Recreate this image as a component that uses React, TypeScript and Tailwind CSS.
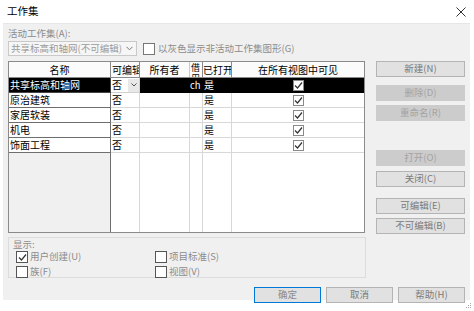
import React from "react";

const font = { fontFamily: '"Noto Sans CJK SC", "Noto Sans", sans-serif' };

function Check({ className = "" }: { className?: string }) {
  return (
    <svg width="9" height="9" viewBox="0 0 9 9" className={className}>
      <polyline points="1,4.5 3.5,7 8,1.5" fill="none" stroke="#333" strokeWidth="1.2" />
    </svg>
  );
}

function Box({ checked, className = "" }: { checked?: boolean; className?: string }) {
  return (
    <div className={`w-[12px] h-[12px] border border-[#555] bg-white flex items-center justify-center shrink-0 ${className}`}>
      {checked && <Check />}
    </div>
  );
}

function Btn({ label, kind }: { label: string; kind: "on" | "off" | "primary" }) {
  const cls =
    kind === "off"
      ? "bg-[#cccccc] border-[#cccccc] text-[#a3a3a3]"
      : kind === "primary"
      ? "bg-[#e1e1e1] border-[#0078d7] text-[#8a8a8a]"
      : "bg-[#e1e1e1] border-[#b4b4b4] text-[#7a7a7a]";
  return (
    <div className={`h-[16px] border flex items-center justify-center text-[9.5px] leading-none ${cls}`}>{label}</div>
  );
}

const rows = [
  { name: "共享标高和轴网", sel: true },
  { name: "原治建筑" },
  { name: "家居软装" },
  { name: "机电" },
  { name: "饰面工程" },
];

export default function App() {
  return (
    <div className="w-[474px] h-[311px] bg-white relative overflow-hidden" style={font}>
      {/* title bar */}
      <div className="h-[23px] flex items-center justify-between pl-[7px] pr-[8px]">
        <span className="text-[10.5px] text-black leading-none">工作集</span>
        <svg width="10" height="10" viewBox="0 0 10 10">
          <path d="M0.5 0.5 L9.5 9.5 M9.5 0.5 L0.5 9.5" stroke="#333" strokeWidth="1" />
        </svg>
      </div>

      {/* body */}
      <div className="ml-[3px] w-[467px] h-[277px] bg-[#f0f0f0] border-t border-[#e6e6e6] flex flex-col">
        <div className="flex pl-[5px]">
          {/* left column */}
          <div className="w-[358px] flex flex-col pt-[3px]">
            <div className="h-[12px] text-[9.5px] leading-[12px] text-[#8c8c8c]">活动工作集(A):</div>
            <div className="mt-[2px] h-[15px] flex items-center">
              <div className="w-[129px] h-[15px] border border-[#c9c9c9] bg-[#f6f6f6] flex items-center justify-between pl-[2px] pr-[3px]">
                <span className="text-[9.5px] leading-none text-[#9a9a9a] whitespace-nowrap">共享标高和轴网(不可编辑)</span>
                <svg width="7" height="5" viewBox="0 0 7 5">
                  <polyline points="0.5,0.8 3.5,3.8 6.5,0.8" fill="none" stroke="#777" strokeWidth="1" />
                </svg>
              </div>
              <Box className="ml-[6px] border-[#777]" />
              <span className="ml-[3px] text-[9.5px] leading-none text-[#8c8c8c] whitespace-nowrap">以灰色显示非活动工作集图形(G)</span>
            </div>

            {/* table */}
            <div className="mt-[5px] w-[357px] h-[172px] border border-[#8a8a8a] bg-white flex flex-col text-[10px] text-black">
              {/* header */}
              <div className="flex h-[16px] border-b border-[#8a8a8a] bg-[#fbfbfb] leading-[15px] shrink-0">
                <div className="w-[102px] border-r border-[#8a8a8a] text-center">名称</div>
                <div className="w-[29px] border-r border-[#8a8a8a] pl-[1px] overflow-hidden whitespace-nowrap">可编辑</div>
                <div className="w-[50px] border-r border-[#c8c8c8] text-center">所有者</div>
                <div className="w-[13px] border-r border-[#8a8a8a] overflow-hidden text-[9px] leading-[11px] pl-[1px] break-all">借用者</div>
                <div className="w-[29px] border-r border-[#8a8a8a] overflow-hidden whitespace-nowrap">已打开</div>
                <div className="flex-1 text-center">在所有视图中可见</div>
              </div>
              {/* rows */}
              {rows.map((r, i) => (
                <div key={i} className={`flex h-[15px] leading-[14px] shrink-0 ${r.sel ? "bg-black text-white" : ""}`}>
                  <div
                    className={`w-[102px] border-r border-b pl-[1px] ${
                      r.sel ? "border-[#444]" : "border-[#6e6e6e] bg-white"
                    }`}
                  >
                    {r.name}
                  </div>
                  {r.sel ? (
                    <div className="w-[29px] border-r border-b border-[#d0d0d0] bg-white text-black flex items-center pl-[1px]">
                      <span className="flex-1">否</span>
                      <div className="w-[11px] h-[13px] bg-[#e8e8e8] flex items-center justify-center">
                        <svg width="6" height="4" viewBox="0 0 6 4">
                          <polyline points="0.5,0.5 3,3 5.5,0.5" fill="none" stroke="#555" strokeWidth="1" />
                        </svg>
                      </div>
                    </div>
                  ) : (
                    <div className="w-[29px] border-r border-b border-[#d8d8d8] pl-[1px]">否</div>
                  )}
                  <div className={`w-[50px] border-r border-b ${r.sel ? "border-black" : "border-[#d8d8d8]"}`}></div>
                  <div className={`w-[13px] border-r border-b overflow-hidden whitespace-nowrap text-[9.5px] ${r.sel ? "border-black" : "border-[#d8d8d8]"}`}>
                    {r.sel ? "ch" : ""}
                  </div>
                  <div className={`w-[29px] border-r border-b pl-[1px] ${r.sel ? "border-black" : "border-[#d8d8d8]"}`}>是</div>
                  <div className={`flex-1 border-b flex items-center justify-center ${r.sel ? "border-black" : "border-[#d8d8d8]"}`}>
                    <div className="w-[11px] h-[11px] border border-[#8a8a8a] bg-white flex items-center justify-center">
                      <Check />
                    </div>
                  </div>
                </div>
              ))}
              {/* empty area */}
              <div className="flex flex-1">
                <div className="w-[102px] bg-[#f0f0f0] border-r border-[#6e6e6e]"></div>
                <div className="w-[29px] border-r border-[#d8d8d8]"></div>
                <div className="w-[50px] border-r border-[#d8d8d8]"></div>
                <div className="w-[13px] border-r border-[#d8d8d8]"></div>
                <div className="w-[29px] border-r border-[#d8d8d8]"></div>
                <div className="flex-1"></div>
              </div>
            </div>

            {/* display group */}
            <div className="mt-[4px] w-[358px] h-[41px] border border-[#dcdcdc] pl-[4px] pt-[1px] text-[9.5px] text-[#8c8c8c]">
              <div className="h-[10px] leading-[10px]">显示:</div>
              <div className="flex mt-[2px]">
                <div className="w-[142px] flex flex-col gap-[3px] pl-[3px]">
                  <div className="flex items-center h-[12px]">
                    <Box checked />
                    <span className="ml-[2px] leading-none">用户创建(U)</span>
                  </div>
                  <div className="flex items-center h-[12px]">
                    <Box />
                    <span className="ml-[2px] leading-none">族(F)</span>
                  </div>
                </div>
                <div className="flex flex-col gap-[3px]">
                  <div className="flex items-center h-[12px]">
                    <Box />
                    <span className="ml-[2px] leading-none">项目标准(S)</span>
                  </div>
                  <div className="flex items-center h-[12px]">
                    <Box />
                    <span className="ml-[2px] leading-none">视图(V)</span>
                  </div>
                </div>
              </div>
            </div>
          </div>

          {/* right column */}
          <div className="w-[89px] ml-[10px] flex flex-col pt-[37px]">
            <Btn label="新建(N)" kind="on" />
            <div className="mt-[8px]"><Btn label="删除(D)" kind="off" /></div>
            <div className="mt-[4px]"><Btn label="重命名(R)" kind="off" /></div>
            <div className="mt-[29px]"><Btn label="打开(O)" kind="off" /></div>
            <div className="mt-[5px]"><Btn label="关闭(C)" kind="on" /></div>
            <div className="mt-[11px]"><Btn label="可编辑(E)" kind="on" /></div>
            <div className="mt-[4px]"><Btn label="不可编辑(B)" kind="on" /></div>
          </div>
        </div>

        {/* bottom buttons */}
        <div className="flex justify-end gap-[5px] pr-[5px] mt-[9px]">
          <div className="w-[67px]"><Btn label="确定" kind="primary" /></div>
          <div className="w-[67px]"><Btn label="取消" kind="on" /></div>
          <div className="w-[67px]"><Btn label="帮助(H)" kind="on" /></div>
        </div>
      </div>

      {/* resize grip */}
      <svg className="absolute right-[2px] bottom-[2px]" width="6" height="6" viewBox="0 0 6 6">
        <rect x="4" y="0" width="1" height="1" fill="#aaa" />
        <rect x="2" y="2" width="1" height="1" fill="#aaa" />
        <rect x="4" y="2" width="1" height="1" fill="#aaa" />
        <rect x="0" y="4" width="1" height="1" fill="#aaa" />
        <rect x="2" y="4" width="1" height="1" fill="#aaa" />
        <rect x="4" y="4" width="1" height="1" fill="#aaa" />
      </svg>
    </div>
  );
}
